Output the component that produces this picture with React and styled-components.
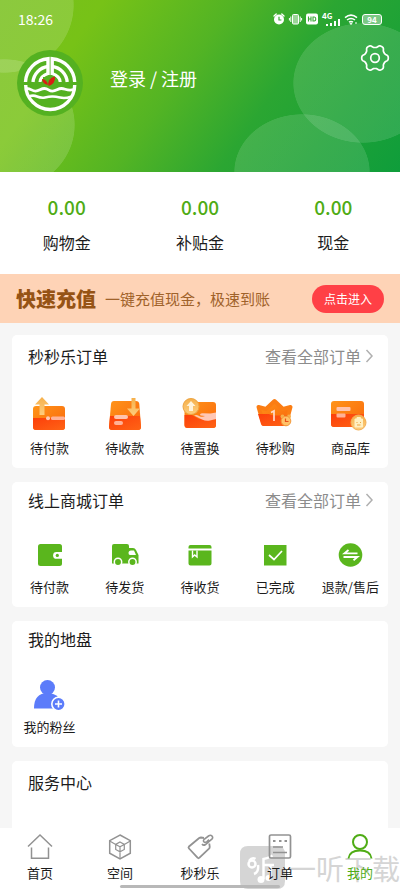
import React from "react";
import styled, { createGlobalStyle } from "styled-components";

const GlobalStyle = createGlobalStyle`
  * {
    box-sizing: border-box;
  }
  body {
    margin: 0;
    background: #f6f6f6;
    color: #1c1c1c;
    font-family: "Noto Sans CJK SC", "Noto Sans", sans-serif;
    font-size: 13px;
  }
  svg {
    display: block;
    flex-shrink: 0;
    overflow: visible;
  }
  a {
    color: inherit;
    text-decoration: none;
  }
`;

/* ---------- status bar ---------- */

const StatusIcons = () => (
  <StatusGroup>
    <svg width="12" height="14" viewBox="0 0 12 14">
      <circle cx="6" cy="7.5" r="5" fill="#fff" />
      <path d="M1 4l2.2-2M11 4L8.8 2" stroke="#fff" strokeWidth="1.4" strokeLinecap="round" />
      <path d="M6 4.8V8h2.4" stroke="#3aa935" strokeWidth="1.2" fill="none" />
    </svg>
    <svg width="13" height="14" viewBox="0 0 13 14" fill="none" stroke="#fff">
      <rect x="3.5" y="2.5" width="6" height="9.5" rx="1" fill="#ffffff80" />
      <path d="M1.8 4.5v5.5M11.2 4.5v5.5M.4 6v2.5M12.6 6v2.5" />
    </svg>
    <svg width="12" height="14" viewBox="0 0 12 14">
      <rect x="0" y="1.5" width="12" height="11" rx="2" fill="#fff" />
      <path d="M2.5 4.5v5M5 4.5v5M2.5 7H5M7 5v4h1.2q1.6 0 1.6-2t-1.6-2z" stroke="#3aa935" strokeWidth="1.1" fill="none" />
    </svg>
    <Signal>
      <small>4G</small>
      <svg width="14" height="7" viewBox="0 0 14 7" fill="#fff">
        <path d="M0 5h2v2H0zM4 4h2v3H4zM8 2h2v5H8zM12 0h2v7h-2z" />
      </svg>
    </Signal>
    <svg width="14" height="14" viewBox="0 0 14 14" fill="none" stroke="#fff" strokeWidth="1.5">
      <path d="M1 5.6q6-5 12 0M3 8q4-3.2 8 0M5 10.2q2-1.5 4 0" />
      <path d="M6 11.3h2L7 12.6zM11 11h2" strokeWidth="1" />
    </svg>
    <Battery>94</Battery>
  </StatusGroup>
);

/* ---------- header ---------- */

const Logo = () => (
  <svg width="66" height="66" viewBox="0 0 66 66" fill="none">
    <circle cx="33" cy="33" r="33" fill="#54b121" />
    <g stroke="#fff" strokeWidth="3.4">
      <path d="M8.5 32A24.500 24.500 0 0 1 31 8.700V25M57.700 32A24.500 24.500 0 0 0 35.200 8.700V25" />
      <path d="M16 32A17 17 0 0 1 31 16.500M50.200 32A17 17 0 0 0 35.200 16.500" />
      <path d="M23 32q.5-6 8-8.500M43.200 32q-.5-6-8-8.500" strokeWidth="3" />
      <path d="M8.700 35a24.500 24.500 0 0 0 49 0" />
      <path d="M9.500 38.500c5 0 5 2.600 9 2.600s5-2.600 9-2.600 4 2.600 8 2.600 5-2.600 9-2.600 5 2.600 12 1.200" strokeWidth="2.800" />
      <path d="M12 46.500q4-1.800 8 0t8 1 7-1 8 1 11-.8" strokeWidth="2.600" />
      <path d="M7 33.400h52" stroke="#54b121" strokeWidth="1.800" />
    </g>
    <path d="M26 27h13v9H26z" fill="#54b121" />
    <path d="M31 35q-5.500-1-6-6 5 .5 6 6zM31.500 36q-1.500-7.500 6.500-9.500.5 7.500-6.500 9.500z" fill="#d81d12" />
  </svg>
);

/* six soft teeth around the hub */
const gearOutline = Array.from({ length: 120 }, (_, i) => {
  const angle = (i / 120) * Math.PI * 2;
  const r = 11.9 + 1.5 * Math.tanh(1.6 * Math.cos(6 * angle));
  return `${(14 + r * Math.cos(angle)).toFixed(2)},${(14 + r * Math.sin(angle)).toFixed(2)}`;
}).join(" ");

const Gear = () => (
  <svg width="28" height="28" viewBox="0 0 28 28" fill="none" stroke="#fff" strokeWidth="1.700" strokeLinejoin="round">
    <polygon points={gearOutline} />
    <circle cx="14" cy="14" r="4.300" />
  </svg>
);

/* ---------- orange order icons ---------- */

const OrangeIcon = ({ children }) => (
  <svg width="40" height="36" viewBox="0 0 40 36">
    <defs>
      <linearGradient id="orange" x1="0" y1="0" x2="1" y2="1">
        <stop offset="0" stopColor="#ff9419" />
        <stop offset="1" stopColor="#f9670c" />
      </linearGradient>
      <linearGradient id="red" x1="0" y1="0" x2="1" y2="1">
        <stop offset="0" stopColor="#fc3f0b" />
        <stop offset="1" stopColor="#ff6415" />
      </linearGradient>
      <linearGradient id="gold" x1="0" y1="0" x2="0" y2="1">
        <stop offset="0" stopColor="#f6b04a" />
        <stop offset="1" stopColor="#fdcd7e" />
      </linearGradient>
    </defs>
    {children}
  </svg>
);

const PayIcon = () => (
  <OrangeIcon>
    <rect x="3" y="10" width="32" height="24" rx="3" fill="url(#orange)" />
    <path d="M3 22h32v9a3 3 0 0 1-3 3H6a3 3 0 0 1-3-3z" fill="url(#red)" />
    <circle cx="18" cy="22.300" r="2" fill="#ffc9b5" />
    <rect x="21" y="20.500" width="14" height="3.400" rx="1.500" fill="#ffb196" />
    <path d="M12 1L19 8.500H14.500V19h-5V8.500H5z" fill="url(#gold)" />
  </OrangeIcon>
);

const ReceiveIcon = () => (
  <OrangeIcon>
    <path d="M9 5h22q3 0 3.300 3L36 31q0 3-3 3H7q-3 0-3-3L6 8q.3-3 3-3z" fill="url(#orange)" />
    <path d="M5 20h30l1 11q0 3-3 3H7q-3 0-3-3z" fill="url(#red)" />
    <rect x="9" y="19" width="14" height="4" rx="2" fill="#ffc3ac" />
    <rect x="9" y="25" width="9" height="4" rx="2" fill="#ffb196" />
    <path d="M26.500 2h4v10.500H35L28.500 20 22 12.500h4.500z" fill="url(#gold)" />
  </OrangeIcon>
);

const SwapIcon = () => (
  <OrangeIcon>
    <rect x="4.500" y="6" width="31.500" height="26" rx="3" fill="url(#orange)" />
    <path d="M4.500 19H12l7 4 17 0v6a3 3 0 0 1-3 3H7.500a3 3 0 0 1-3-3z" fill="url(#red)" />
    <path d="M14 19.500q3-1.500 6 1 3 .8 5-.5l-4.500-.5q-1.500-2 2-2.200l8 .2 5.500-1v6.500l-6 1.500q-4 1-8-1-4-2-8-4z" fill="#ffc7b5" />
    <circle cx="11" cy="10.500" r="8" fill="url(#gold)" stroke="#eda441" />
    <path d="M11 5l4.500 5H13v5H9v-5H6.500z" fill="#fff3d9" />
  </OrangeIcon>
);

const CrownIcon = () => (
  <OrangeIcon>
    <path d="M3.500 11L11 13l8.500-8L28 13l7.500-2L31 28H8.500z" fill="url(#orange)" stroke="#fb7d13" strokeWidth="4" strokeLinejoin="round" />
    <path d="M3 18h11q4 2.500 21 1l-2.500 9q-.5 2-2.500 2H8.500q-2 0-2.500-2z" fill="url(#red)" />
    <path d="M16 16.500l3-1.500v10" stroke="#ffd9c9" strokeWidth="1.700" fill="none" />
    <circle cx="27.500" cy="20.500" r="2" fill="#f6b04a" />
    <circle cx="34" cy="20.500" r="2" fill="#f6b04a" />
    <circle cx="31" cy="25" r="4.800" fill="#ffc269" stroke="#f39a3c" />
    <path d="M30.500 22.500v3h3" stroke="#e8501b" strokeWidth="1.200" fill="none" />
  </OrangeIcon>
);

const GoodsIcon = () => (
  <OrangeIcon>
    <rect x="1" y="5" width="33" height="26" rx="3" fill="url(#orange)" />
    <path d="M1 18h33v10a3 3 0 0 1-3 3H4a3 3 0 0 1-3-3z" fill="url(#red)" />
    <rect x="6.500" y="11" width="14" height="4" rx="1" fill="#ffc3ac" />
    <rect x="6.500" y="17.500" width="9" height="4" rx="1" fill="#ffb196" />
    <circle cx="28.500" cy="26.500" r="7.500" fill="url(#gold)" stroke="#f3b057" />
    <path d="M25 23h7.500v8H25zM27 23v-1.500h3.500V23" fill="#fff0c2" stroke="#fff0c2" />
    <path d="M27 26v1M30.500 26v1M27 29h3.500" stroke="#eda441" />
  </OrangeIcon>
);

/* ---------- green order icons ---------- */

const GREEN = "#5ab61d";

const WalletIcon = () => (
  <svg width="28" height="24" viewBox="0 0 28 24">
    <rect x="2" y="1" width="24" height="22" rx="2.500" fill={GREEN} />
    <path d="M27 9h-6.500a3.400 3.400 0 0 0 0 6.800H27z" fill="#fff" />
    <circle cx="21.300" cy="12.400" r="1.600" fill={GREEN} />
  </svg>
);

const TruckIcon = () => (
  <svg width="28" height="24" viewBox="0 0 28 24">
    <path d="M3 1h13q2 0 2 2v2h4q2 0 3 2l2.500 5v8.500H1V3q0-2 2-2z" fill={GREEN} />
    <path d="M20 7.500h3l2 4.500h-6q-1.500 0-1.500-2 0-2.500 2.500-2.500z" fill="#fff" />
    <circle cx="7" cy="19" r="3.700" fill={GREEN} stroke="#fff" strokeWidth="1.500" />
    <circle cx="21.500" cy="19" r="3.700" fill={GREEN} stroke="#fff" strokeWidth="1.500" />
  </svg>
);

const ParcelIcon = () => (
  <svg width="28" height="24" viewBox="0 0 28 24">
    <path d="M4.500 2h19q2 0 2 2v1.500h-23V4q0-2 2-2zM2.500 7.500h23v13q0 2-2 2h-19q-2 0-2-2z" fill={GREEN} />
    <path d="M6.500 7.500V14l2.200-2 2.300 2V7.500" stroke="#fff" strokeWidth="1.400" fill="none" />
  </svg>
);

const DoneIcon = () => (
  <svg width="28" height="24" viewBox="0 0 28 24">
    <path d="M3 2h22.500v20.500H3z" fill={GREEN} />
    <path d="M8 12l5 4.500 8-8.500" stroke="#fff" strokeWidth="1.700" fill="none" />
  </svg>
);

const RefundIcon = () => (
  <svg width="28" height="24" viewBox="0 0 28 24">
    <circle cx="14.500" cy="12" r="11.800" fill={GREEN} />
    <path d="M21.500 10.300H8.500L12.500 7M7.500 14h14l-4 3.300" stroke="#fff" strokeWidth="1.800" fill="none" />
  </svg>
);

const FansIcon = () => (
  <svg width="32" height="32" viewBox="0 0 32 32">
    <circle cx="13.500" cy="8.500" r="7.500" fill="#5c7cfa" />
    <path d="M0 29.500Q0 14 13.500 14q7 0 11 4.500v11z" fill="#5c7cfa" />
    <circle cx="24.500" cy="25" r="6.700" fill="#5c7cfa" stroke="#fff" strokeWidth="1.600" />
    <path d="M24.500 21.500v7M21 25h7" stroke="#fff" strokeWidth="1.600" />
  </svg>
);

const Chevron = () => (
  <svg width="7" height="14" viewBox="0 0 7 14" fill="none" stroke="#b0b0b0" strokeWidth="1.500">
    <path d="M.5 1l5.500 6-5.500 6" />
  </svg>
);

/* ---------- tab bar icons ---------- */

const TabIcon = ({ children }) => (
  <svg width="28" height="28" viewBox="0 0 28 28" fill="none" stroke="currentColor" strokeWidth="1.500">
    {children}
  </svg>
);

const tabs = [
  {
    label: "首页",
    icon: <path d="M2 13.500L14 2l12 11.500M5.500 14.500v10.700h17V14.500" />,
  },
  {
    label: "空间",
    icon: (
      <>
        <path d="M14 2l10.300 5.700v12.500L14 25.800 3.700 20.200V7.700z" />
        <path d="M14 9l4.300 2.400v5L14 18.800l-4.300-2.400v-5zM14 13.800V26M14 13.800L9.700 11.400 3.700 8M14 13.800l4.300-2.400 6-3.400" strokeWidth="1.200" />
      </>
    ),
  },
  {
    label: "秒秒乐",
    icon: (
      <>
        <path d="M18 5l-3-.5q-1 0-1.800.5L3 13.500q-1 1 0 2l8.500 9.200q1 1 2 0l9.500-9q.8-.8.700-2L23.300 10.500" strokeWidth="1.800" />
        <path d="M16 11q1.500 2 3.500.5l6-5q2-1.500.5-3.500-1.500-1.500-3.500 0l-4 3q-1.800 1.700-.5 3 1.200 1 3-.5l2-1.800" strokeWidth="1.600" />
      </>
    ),
  },
  {
    label: "订单",
    icon: (
      <>
        <rect x="3.500" y="2" width="21" height="23" rx="1.500" strokeWidth="1.700" />
        <path d="M7 14h10M7 19.500h14" />
        <path d="M7 8h2.500M13 8h2.500M18.500 8H21" strokeWidth="2.200" />
      </>
    ),
  },
  {
    label: "我的",
    active: true,
    icon: (
      <>
        <circle cx="14" cy="9" r="7" strokeWidth="2" />
        <path d="M2.500 25.500q1-8 11.500-8t11.500 8" strokeWidth="2" />
      </>
    ),
  },
];

const balances = [
  { value: "0.00", label: "购物金" },
  { value: "0.00", label: "补贴金" },
  { value: "0.00", label: "现金" },
];

const flashOrders = [
  { label: "待付款", icon: <PayIcon /> },
  { label: "待收款", icon: <ReceiveIcon /> },
  { label: "待置换", icon: <SwapIcon /> },
  { label: "待秒购", icon: <CrownIcon /> },
  { label: "商品库", icon: <GoodsIcon /> },
];

const mallOrders = [
  { label: "待付款", icon: <WalletIcon /> },
  { label: "待发货", icon: <TruckIcon /> },
  { label: "待收货", icon: <ParcelIcon /> },
  { label: "已完成", icon: <DoneIcon /> },
  { label: "退款/售后", icon: <RefundIcon /> },
];

const Section = ({ title, more, items = [], top, space, gap }) => (
  <Card $top={top}>
    <CardHead>
      <h2>{title}</h2>
      {more && (
        <More href="#">
          查看全部订单
          <Chevron />
        </More>
      )}
    </CardHead>
    {items.length > 0 && (
      <Items $space={space}>
        {items.map((item) => (
          <Item href="#" key={item.label} $gap={gap}>
            {item.icon}
            <span>{item.label}</span>
          </Item>
        ))}
      </Items>
    )}
  </Card>
);

const App = () => {
  return (
    <Screen>
      <GlobalStyle />
      <Content>
        <Header>
          <StatusBar>
            <time>18:26</time>
            <StatusIcons />
          </StatusBar>
          <Profile>
            <Logo />
            <Login href="#">登录 / 注册</Login>
            <Settings aria-label="设置">
              <Gear />
            </Settings>
          </Profile>
        </Header>

        <Balances>
          {balances.map((b) => (
            <Balance key={b.label}>
              <strong>{b.value}</strong>
              <span>{b.label}</span>
            </Balance>
          ))}
        </Balances>

        <Banner>
          <strong>快速充值</strong>
          <p>一键充值现金，极速到账</p>
          <Enter>点击进入</Enter>
        </Banner>

        <Cards>
          <Section title="秒秒乐订单" more items={flashOrders} top={9} space={28} gap={6} />
          <Section title="线上商城订单" more items={mallOrders} top={6} space={31} gap={10} />
          <Section title="我的地盘" items={[{ label: "我的粉丝", icon: <FansIcon /> }]} top={6} space={28} gap={6} />
          <Section title="服务中心" top={9} />
        </Cards>
      </Content>

      <TabBar>
        <Watermark>
          <svg width="45" height="43" viewBox="0 0 45 43" fill="none">
            <path d="M8 0h29q8 0 8 8v27q0 8-8 8H8q-8 0-8-8V8q0-8 8-8z" fill="#8c8c8c" />
            <g stroke="#fff" strokeWidth="2.500">
              <circle cx="12" cy="18" r="3.500" />
              <path d="M9 15q3-4 6.500-2M18 19q1 7-4 9M23.500 33V13q4-.5 9-3.500M24 19h10M30.500 19v13" />
            </g>
            <circle cx="21" cy="33.500" r="3.500" fill="#fff" />
            <circle cx="28.500" cy="32" r="3" fill="#fff" />
          </svg>
          <span>一听下载</span>
        </Watermark>
        {tabs.map((tab) => (
          <Tab href="#" key={tab.label} $active={tab.active}>
            <TabIcon>{tab.icon}</TabIcon>
            <span>{tab.label}</span>
          </Tab>
        ))}
        <HomeIndicator />
      </TabBar>
    </Screen>
  );
};

export default App;

const Screen = styled.div`
  height: 100vh;
  display: flex;
  flex-direction: column;
`;

const Content = styled.main`
  flex: 1;
  min-height: 0;
  overflow-y: auto;
  scrollbar-width: none;
`;

const Header = styled.header`
  height: 172px;
  color: #fff;
  /* soft bubbles over the green */
  background:
    radial-gradient(70px 68px at 4px 5px, #ffffff26 99%, transparent),
    radial-gradient(71px 66px at 4px 125px, #ffffff26 99%, transparent),
    radial-gradient(70px 60px at calc(100% - 37px) 83px, #ffffff1f 99%, transparent),
    radial-gradient(68px 58px at calc(100% - 98px) 172px, #ffffff1f 99%, transparent),
    linear-gradient(125deg, #78c01c 0%, #77c217 20%, #53b424 45%, #2ba632 65%, #0f9d3b 100%);
`;

const StatusBar = styled.div`
  height: 38px;
  display: flex;
  align-items: center;
  justify-content: space-between;
  padding: 0 18px;
  font-size: 14px;
`;

const StatusGroup = styled.div`
  display: flex;
  align-items: center;
  gap: 4px;
`;

const Signal = styled.div`
  display: flex;
  flex-direction: column;
  align-items: flex-end;
  width: 18px;
  small {
    align-self: flex-start;
    font-size: 8px;
    line-height: 7px;
    font-weight: 700;
  }
`;

const Battery = styled.span`
  width: 20px;
  height: 11px;
  border: 1px solid #fff;
  border-radius: 3px;
  background: #ffffff66;
  font-size: 8px;
  line-height: 9px;
  font-weight: 700;
  text-align: center;
`;

const Profile = styled.div`
  display: flex;
  align-items: flex-start;
  padding: 6px 11px 0 17px;
  > svg {
    margin-top: 6px;
  }
`;

const Login = styled.a`
  flex: 1;
  margin: 21px 0 0 27px;
  font-size: 18px;
  line-height: 26px;
`;

const Settings = styled.button`
  padding: 0;
  border: 0;
  background: none;
  cursor: pointer;
`;

const Balances = styled.section`
  display: grid;
  grid-template-columns: repeat(3, 1fr);
  padding: 21px 0 20px;
  background: #fff;
`;

const Balance = styled.div`
  display: flex;
  flex-direction: column;
  align-items: center;
  gap: 9px;
  strong {
    font-size: 19px;
    line-height: 28px;
    font-weight: 500;
    color: #4fac15;
  }
  span {
    font-size: 16px;
    line-height: 24px;
  }
`;

const Banner = styled.section`
  display: flex;
  align-items: center;
  height: 49px;
  padding: 0 16px;
  background: #fed3b6;
  color: #a0622a;
  strong {
    font-size: 20px;
    line-height: 24px;
    font-weight: 900;
    color: #965315;
  }
  p {
    flex: 1;
    margin: 0 0 0 9px;
    font-size: 15px;
    line-height: 24px;
    white-space: nowrap;
  }
`;

const Enter = styled.button`
  width: 72px;
  height: 28px;
  padding: 0;
  border: 0;
  border-radius: 14px;
  background: #ff4046;
  color: #fff;
  font: inherit;
  font-size: 12px;
  cursor: pointer;
`;

const Cards = styled.div`
  display: flex;
  flex-direction: column;
  gap: 14px;
  padding: 12px 12px 0;
`;

const Card = styled.section`
  min-height: 125px;
  padding: ${(props) => props.$top}px 0 10px;
  border-radius: 5px;
  background: #fff;
`;

const CardHead = styled.div`
  display: flex;
  justify-content: space-between;
  padding: 0 15px 0 16px;
  line-height: 24px;
  h2 {
    margin: 0;
    font-size: 16px;
    font-weight: 400;
  }
`;

const More = styled.a`
  display: flex;
  align-items: center;
  gap: 5px;
  font-size: 16px;
  color: #8c8c8c;
`;

const Items = styled.div`
  display: grid;
  grid-template-columns: repeat(5, 1fr);
  margin-top: ${(props) => props.$space}px;
`;

const Item = styled.a`
  display: flex;
  flex-direction: column;
  align-items: center;
  gap: ${(props) => props.$gap}px;
  line-height: 20px;
  white-space: nowrap;
`;

const TabBar = styled.nav`
  position: relative;
  display: grid;
  grid-template-columns: repeat(5, 1fr);
  padding: 5px 0 7px;
  background: #fff;
`;

const Tab = styled.a`
  position: relative;
  display: flex;
  flex-direction: column;
  align-items: center;
  gap: 3px;
  line-height: 18px;
  color: ${(props) => (props.$active ? "#4fac15" : "#1c1c1c")};
  svg {
    color: ${(props) => (props.$active ? "#4fac15" : "#929292")};
  }
`;

const HomeIndicator = styled.div`
  position: absolute;
  left: 30%;
  bottom: 1px;
  width: 40%;
  height: 3px;
  border-radius: 2px;
  background: #b8b8b8;
`;

const Watermark = styled.div`
  position: absolute;
  right: 0;
  bottom: 0;
  display: flex;
  align-items: center;
  gap: 3px;
  color: #8c8c8c;
  font-size: 28px;
  line-height: 42px;
  opacity: 0.36;
  pointer-events: none;
`;
